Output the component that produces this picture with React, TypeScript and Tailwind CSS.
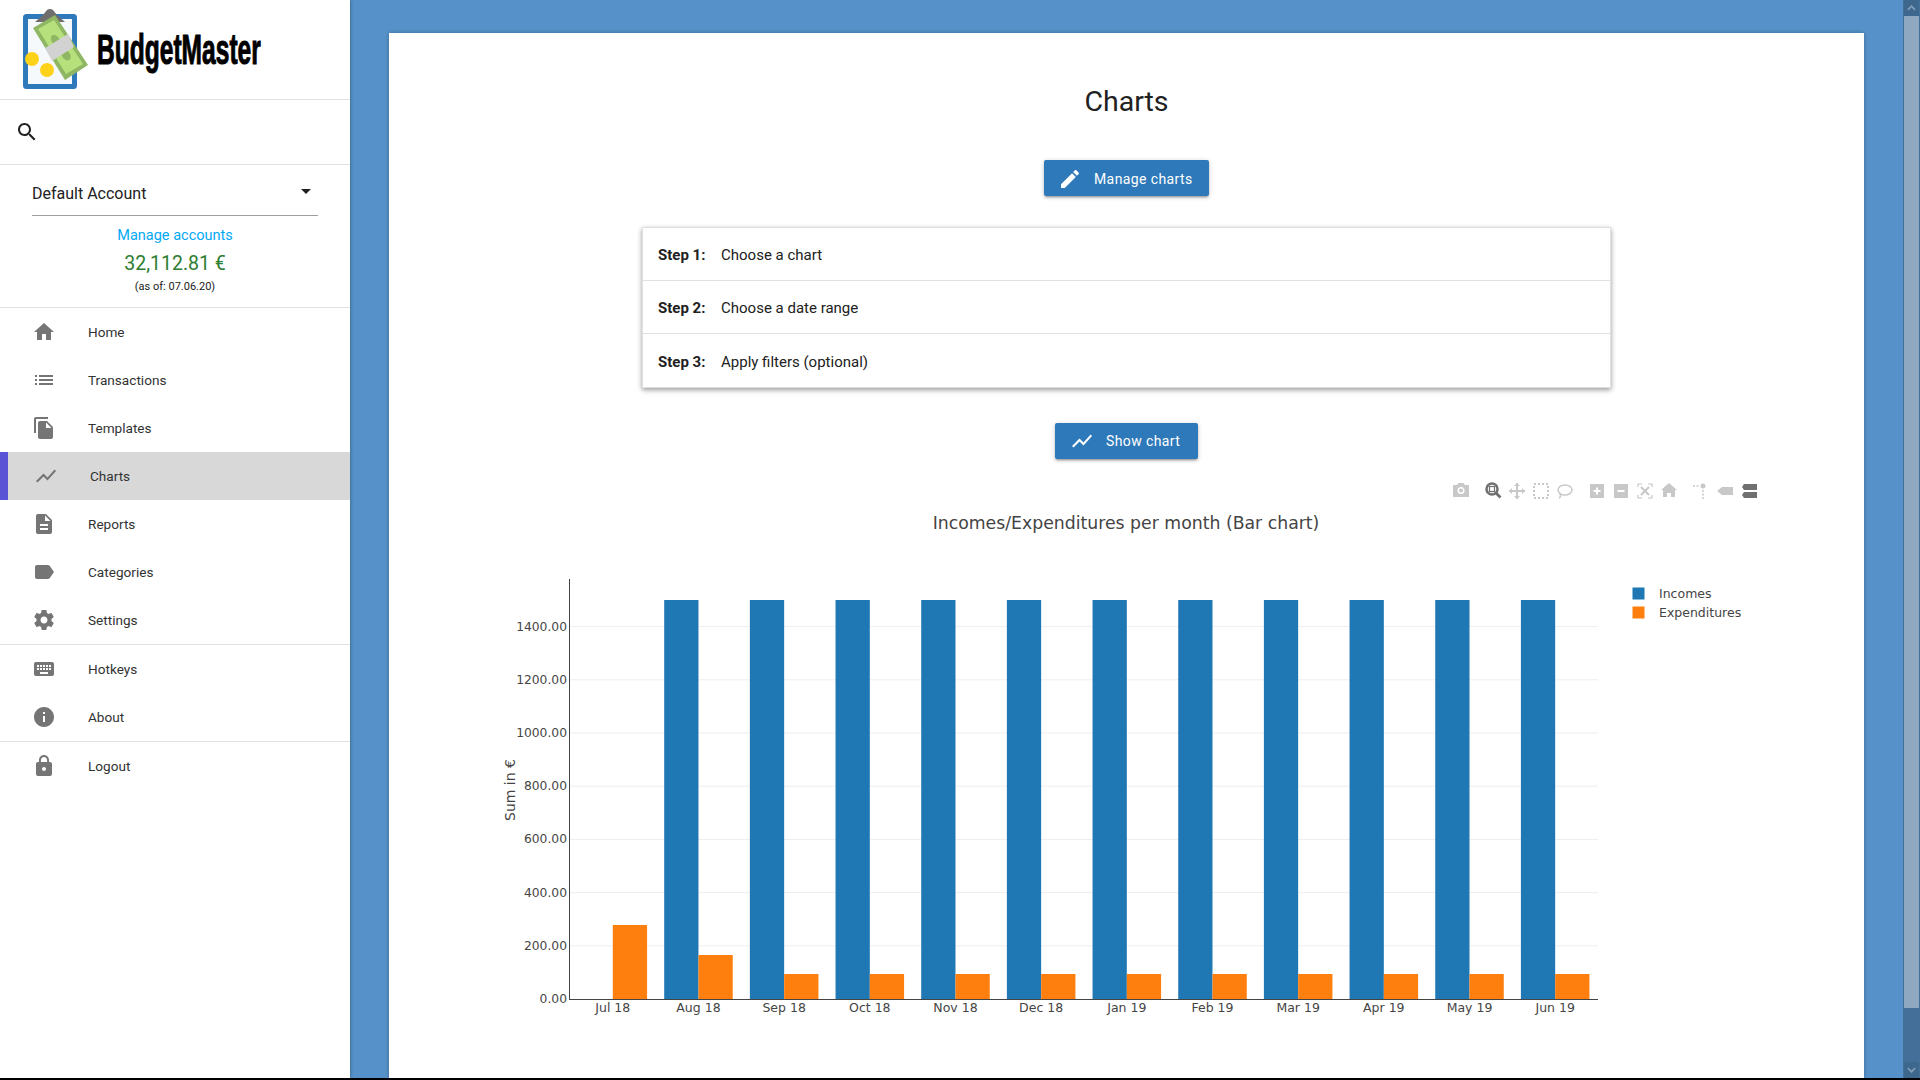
const iconPaths = {
  home: "M10 20v-6h4v6h5v-8h3L12 3 2 12h3v8z",
  list: "M3 13h2v-2H3v2zm0 4h2v-2H3v2zm0-8h2V7H3v2zm4 4h14v-2H7v2zm0 4h14v-2H7v2zM7 7v2h14V7H7z",
  copy: "M16 1H4c-1.1 0-2 .9-2 2v14h2V3h12V1zm-1 4l6 6v10c0 1.1-.9 2-2 2H7.99C6.89 23 6 22.1 6 21l.01-14c0-1.1.89-2 1.99-2h7zm-1 7h5.5L14 6.5V12z",
  chart: "M3.5 18.49l6-6.01 4 4L22 6.92l-1.41-1.41-7.09 7.97-4-4L2 16.99z",
  description: "M14 2H6c-1.1 0-1.99.9-1.99 2L4 20c0 1.1.89 2 1.99 2H18c1.1 0 2-.9 2-2V8l-6-6zm2 16H8v-2h8v2zm0-4H8v-2h8v2zm-3-5V3.5L18.5 9H13z",
  label: "M17.63 5.84C17.27 5.33 16.67 5 16 5L5 5.01C3.9 5.01 3 5.9 3 7v10c0 1.1.9 1.99 2 1.99L16 19c.67 0 1.27-.33 1.63-.84L22 12l-4.37-6.16z",
  settings: "M19.43 12.98c.04-.32.07-.64.07-.98s-.03-.66-.07-.98l2.11-1.65c.19-.15.24-.42.12-.64l-2-3.46c-.12-.22-.39-.3-.61-.22l-2.49 1c-.52-.4-1.08-.73-1.69-.98l-.38-2.65C14.46 2.18 14.25 2 14 2h-4c-.25 0-.46.18-.49.42l-.38 2.65c-.61.25-1.17.59-1.69.98l-2.49-1c-.23-.09-.49 0-.61.22l-2 3.46c-.13.22-.07.49.12.64l2.11 1.65c-.04.32-.07.65-.07.98s.03.66.07.98l-2.11 1.65c-.19.15-.24.42-.12.64l2 3.46c.12.22.39.3.61.22l2.49-1c.52.4 1.08.73 1.69.98l.38 2.65c.03.24.24.42.49.42h4c.25 0 .46-.18.49-.42l.38-2.65c.61-.25 1.17-.59 1.69-.98l2.49 1c.23.09.49 0 .61-.22l2-3.46c.12-.22.07-.49-.12-.64l-2.11-1.65zM12 15.5c-1.93 0-3.5-1.57-3.5-3.5s1.57-3.5 3.5-3.5 3.5 1.57 3.5 3.5-1.57 3.5-3.5 3.5z",
  keyboard: "M20 5H4c-1.1 0-1.99.9-1.99 2L2 17c0 1.1.9 2 2 2h16c1.1 0 2-.9 2-2V7c0-1.1-.9-2-2-2zm-9 3h2v2h-2V8zm0 3h2v2h-2v-2zM8 8h2v2H8V8zm0 3h2v2H8v-2zm-1 2H5v-2h2v2zm0-3H5V8h2v2zm9 7H8v-2h8v2zm0-4h-2v-2h2v2zm0-3h-2V8h2v2zm3 3h-2v-2h2v2zm0-3h-2V8h2v2z",
  info: "M12 2C6.48 2 2 6.48 2 12s4.48 10 10 10 10-4.48 10-10S17.52 2 12 2zm1 15h-2v-6h2v6zm0-8h-2V7h2v2z",
  lock: "M18 8h-1V6c0-2.76-2.24-5-5-5S7 3.24 7 6v2H6c-1.1 0-2 .9-2 2v10c0 1.1.9 2 2 2h12c1.1 0 2-.9 2-2V10c0-1.1-.9-2-2-2zm-6 9c-1.1 0-2-.9-2-2s.9-2 2-2 2 .9 2 2-.9 2-2 2zm3.1-9H8.9V6c0-1.71 1.39-3.1 3.1-3.1 1.71 0 3.1 1.39 3.1 3.1v2z",
  search: "M15.5 14h-.79l-.28-.27C15.41 12.59 16 11.11 16 9.5 16 5.91 13.09 3 9.5 3S3 5.91 3 9.5 5.91 16 9.5 16c1.61 0 3.09-.59 4.23-1.57l.27.28v.79l5 4.99L20.49 19l-4.99-5zm-6 0C7.01 14 5 11.99 5 9.5S7.01 5 9.5 5 14 7.01 14 9.5 11.99 14 9.5 14z",
  edit: "M3 17.25V21h3.75L17.81 9.94l-3.75-3.75L3 17.25zM20.71 7.04c.39-.39.39-1.02 0-1.41l-2.34-2.34c-.39-.39-1.02-.39-1.41 0l-1.83 1.83 3.75 3.75 1.83-1.83z",
};

function Icon({ name, className }: { name: keyof typeof iconPaths; className: string }) {
  return (
    <svg viewBox="0 0 24 24" fill="currentColor" className={className}>
      <path d={iconPaths[name]} />
    </svg>
  );
}

function Logo() {
  return (
    <svg viewBox="0 0 90 100" className="w-[90px] h-[100px] shrink-0">
      <rect x="25.5" y="16.5" width="49" height="70" rx="1" fill="#f6f9fc" stroke="#2e79b9" strokeWidth="5" />
      <path d="M35 22 L43 15 L47 10 Q50 8 53 10 L57 15 L65 22 Z" fill="#6e6e6e" />
      <path d="M33 28 L55 15 L88 65 L65 80 Z" fill="#8fb662" />
      <path d="M38 29 L54 20 L83 64 L66 74 Z" fill="#b6e07c" />
      <ellipse cx="56" cy="41" rx="4" ry="7" transform="rotate(-33 56 41)" fill="#8fb662" />
      <ellipse cx="66" cy="55" rx="4" ry="6" transform="rotate(-33 66 55)" fill="#8fb662" />
      <path d="M45 48 L68 34 L74 47 L52 61 Z" fill="#d2d2d2" />
      <circle cx="32" cy="59" r="7" fill="#ffd21a" />
      <circle cx="47" cy="70" r="7" fill="#ffd21a" />
    </svg>
  );
}

const navGroups: { icon: keyof typeof iconPaths; label: string; active?: boolean }[][] = [
  [
    { icon: "home", label: "Home" },
    { icon: "list", label: "Transactions" },
    { icon: "copy", label: "Templates" },
    { icon: "chart", label: "Charts", active: true },
    { icon: "description", label: "Reports" },
    { icon: "label", label: "Categories" },
    { icon: "settings", label: "Settings" },
  ],
  [
    { icon: "keyboard", label: "Hotkeys" },
    { icon: "info", label: "About" },
  ],
  [{ icon: "lock", label: "Logout" }],
];

function Sidebar() {
  return (
    <aside className="w-[350px] shrink-0 h-full bg-white shadow-[1px_0_3px_rgba(0,0,0,0.25)] z-10 text-[#212121]">
      <div className="h-[100px] border-b border-[#e0e0e0] flex items-start">
        <Logo />
        <span className="font-['Liberation_Sans',sans-serif] font-bold text-[42px] leading-[99px] text-black ml-[7px] scale-x-[0.585] origin-left [-webkit-text-stroke:1px_black]">
          BudgetMaster
        </span>
      </div>
      <div className="h-[65px] border-b border-[#e0e0e0] flex items-center pl-[15px]">
        <Icon name="search" className="w-6 h-6 text-[#212121]" />
      </div>
      <div className="h-[143px] border-b border-[#e0e0e0] px-[32px]">
        <div className="h-[51px] border-b border-[#9e9e9e] flex items-center justify-between pt-[8px] w-[286px] text-base">
          <span>Default Account</span>
          <svg viewBox="0 0 24 24" fill="currentColor" className="w-6 h-6 -mt-[6px]">
            <path d="M7 10l5 5 5-5z" />
          </svg>
        </div>
        <div className="w-[286px] text-center">
          <div className="text-[14.5px] leading-[20px] mt-[10px] text-[#03a9f4]">Manage accounts</div>
          <div className="text-[19.5px] leading-[24px] mt-[6px] text-[#2e7d32]">32,112.81 €</div>
          <div className="text-[11px] leading-4 mt-[3px]">(as of: 07.06.20)</div>
        </div>
      </div>
      {navGroups.map((group, i) => (
        <div key={i} className={i < navGroups.length - 1 ? "border-b border-[#e0e0e0]" : ""}>
          {group.map((item) => (
            <div
              key={item.label}
              className={
                item.active
                  ? "h-12 flex items-center gap-8 bg-[#d8d8d8] border-l-8 border-[#5b53d6] pl-[26px] text-[13.6px] text-[#333]"
                  : "h-12 flex items-center gap-8 pl-[32px] text-[13.6px] text-[#333]"
              }
            >
              <Icon name={item.icon} className="w-6 h-6 text-[#757575] shrink-0" />
              <span>{item.label}</span>
            </div>
          ))}
        </div>
      ))}
    </aside>
  );
}

function BlueButton({ icon, label, className }: { icon: keyof typeof iconPaths; label: string; className: string }) {
  return (
    <div
      className={`h-9 flex items-center bg-[#2e79b9] text-white text-sm tracking-[0.4px] rounded-[2px] shadow-[0_2px_2px_rgba(0,0,0,0.14),0_3px_1px_-2px_rgba(0,0,0,0.12),0_1px_5px_rgba(0,0,0,0.2)] ${className}`}
    >
      <Icon name={icon} className="w-6 h-6 mr-[12px]" />
      <span>{label}</span>
    </div>
  );
}

const steps = [
  ["Step 1:", "Choose a chart", "pt-[2px]"],
  ["Step 2:", "Choose a date range", "pt-[2px]"],
  ["Step 3:", "Apply filters (optional)", "pt-[3px]"],
];

const months = ["Jul 18", "Aug 18", "Sep 18", "Oct 18", "Nov 18", "Dec 18", "Jan 19", "Feb 19", "Mar 19", "Apr 19", "May 19", "Jun 19"];
const expenditures = [925, 955, 974, 974, 974, 974, 974, 974, 974, 974, 974, 974];
const ticks = [0, 200, 400, 600, 800, 1000, 1200, 1400];

const barWidth = 34.27;
const step = 85.67;
const inactive = "#c8c8c8";
const activeTool = "#707070";

function Modebar() {
  return (
    <g>
      {/* camera */}
      <path d="M1453 485h4l1.5-2h5l1.500 2h4v12h-16z" fill={inactive} />
      <circle cx="1461" cy="490.500" r="3.500" fill="#fff" />
      <circle cx="1461" cy="490.500" r="2" fill={inactive} />
      {/* zoom */}
      <circle cx="1492" cy="489" r="5.500" fill="#fff" stroke={activeTool} strokeWidth="2.500" />
      <rect x="1489.500" y="486.500" width="5" height="5" fill="#fff" stroke={activeTool} strokeWidth="1.200" />
      <path d="M1496 493l4.500 4.500" stroke={activeTool} strokeWidth="2.800" />
      {/* pan */}
      <path d="M1517 483v16M1509 491h16" stroke={inactive} strokeWidth="2" />
      <path d="M1517 483l-3 3h6zM1517 499l-3-3h6zM1509 491l3-3v6zM1525 491l-3-3v6z" fill={inactive} />
      {/* box select */}
      <rect x="1534" y="484" width="14" height="14" fill="none" stroke={inactive} strokeWidth="2" strokeDasharray="2 2" />
      {/* lasso */}
      <ellipse cx="1565" cy="490" rx="7" ry="5" fill="none" stroke={inactive} strokeWidth="1.500" />
      <path d="M1560 494c1 2 0 4-1 4" fill="none" stroke={inactive} strokeWidth="1.500" />
      {/* zoom in */}
      <rect x="1590" y="484" width="14" height="14" fill={inactive} />
      <path d="M1597 487.500v7M1593.500 491h7" stroke="#fff" strokeWidth="2" />
      {/* zoom out */}
      <rect x="1614" y="484" width="14" height="14" fill={inactive} />
      <path d="M1617.500 491h7" stroke="#fff" strokeWidth="2" />
      {/* autoscale */}
      <path d="M1638 487v-3h4M1648 484h4v3M1652 495v3h-4M1642 498h-4v-3" fill="none" stroke={inactive} strokeWidth="1.200" />
      <path d="M1641 487l8 8M1649 487l-8 8" stroke={inactive} strokeWidth="2" />
      {/* home */}
      <path d="M1669 483l-8 7h2v7h4v-4h4v4h4v-7h2z" fill={inactive} />
      {/* spikes */}
      <circle cx="1703" cy="486" r="2.500" fill={inactive} />
      <path d="M1693 486h6M1703 490v9" stroke={inactive} strokeWidth="1.500" strokeDasharray="2 1.500" />
      {/* hover closest */}
      <path d="M1717 491l5-4h11v8h-11z" fill={inactive} />
      {/* hover compare */}
      <path d="M1742 487l2-3h13v6h-13zM1742 495l2-3h13v6h-13z" fill={activeTool} />
    </g>
  );
}

function BarChart() {
  return (
    <svg viewBox="389 470 1475 608" className="w-[1475px] h-[608px] block font-['DejaVu_Sans',sans-serif]">
      <Modebar />
      <text x="1126" y="529" textAnchor="middle" fontSize="17.3" fill="#444">
        Incomes/Expenditures per month (Bar chart)
      </text>

      {ticks.slice(1).map((t) => {
        const y = 999 - (t / 200) * 53.2;
        return <line key={t} x1="570" x2="1598" y1={y} y2={y} stroke="#eee" strokeWidth="1" />;
      })}

      {months.map((m, i) => {
        const center = 612.8 + i * step;
        return (
          <g key={m}>
            {i > 0 && <rect x={center - barWidth} y="600" width={barWidth} height="399" fill="#1f77b4" />}
            <rect x={center} y={expenditures[i]} width={barWidth} height={999 - expenditures[i]} fill="#ff7f0e" />
            <text x={center} y="1012" textAnchor="middle" fontSize="12.5" fill="#444">
              {m}
            </text>
          </g>
        );
      })}

      <line x1="569.500" x2="569.500" y1="579" y2="999.500" stroke="#444" strokeWidth="1" />
      <line x1="569" x2="1598" y1="999.500" y2="999.500" stroke="#444" strokeWidth="1" />

      {ticks.map((t) => (
        <text key={t} x="567" y={999 - (t / 200) * 53.2 + 4} textAnchor="end" fontSize="12.3" fill="#444">
          {t.toFixed(2)}
        </text>
      ))}

      <text transform="translate(515 790) rotate(-90)" textAnchor="middle" fontSize="14" fill="#444">
        Sum in €
      </text>

      <rect x="1632.500" y="587.500" width="12" height="12" fill="#1f77b4" />
      <text x="1659" y="597.500" fontSize="12.500" fill="#444">
        Incomes
      </text>
      <rect x="1632.500" y="606.500" width="12" height="12" fill="#ff7f0e" />
      <text x="1659" y="616.500" fontSize="12.500" fill="#444">
        Expenditures
      </text>
    </svg>
  );
}

function Scrollbar() {
  return (
    <div className="w-[17px] shrink-0 h-full bg-[#436f98] flex flex-col items-center">
      <div className="w-[15px] h-4 bg-[#3d678d] flex items-center justify-center">
        <svg viewBox="0 0 10 6" className="w-[9px] h-[6px]">
          <path d="M1 5l4-4 4 4" fill="none" stroke="#7f9cb8" strokeWidth="2" />
        </svg>
      </div>
      <div className="w-[15px] h-[992px] bg-[#8fa8c2]" />
      <div className="flex-1" />
      <div className="w-[15px] h-4 bg-[#3d678d] flex items-center justify-center">
        <svg viewBox="0 0 10 6" className="w-[9px] h-[6px]">
          <path d="M1 1l4 4 4-4" fill="none" stroke="#7f9cb8" strokeWidth="2" />
        </svg>
      </div>
    </div>
  );
}

export default function App() {
  return (
    <div className="h-[1080px] w-[1920px] overflow-hidden bg-black font-['Roboto',sans-serif]">
      <div className="h-[1078px] flex bg-[#5692c9]">
        <Sidebar />
        <main className="flex-1 h-full pl-[39px] pt-[33px] overflow-hidden">
          <div className="w-[1475px] h-[1045px] bg-white shadow-[0_0_4px_rgba(0,0,0,0.3)] flex flex-col items-center">
            <h1 className="text-[28.5px] leading-[38px] mt-[50px] text-[#212121]">Charts</h1>
            <BlueButton icon="edit" label="Manage charts" className="w-[165px] mt-[39px] pl-[14px] pt-px" />
            <div className="w-[969px] mt-[31px] bg-white shadow-[0_2px_5px_rgba(0,0,0,0.4)] border border-[#e0e0e0]">
              {steps.map(([a, b, pad], i) => (
                <div
                  key={a}
                  className={`h-[53px] flex items-center px-[15px] text-[15px] text-[#212121] ${pad} ${i < 2 ? "border-b border-[#e0e0e0]" : ""}`}
                >
                  <span className="font-bold w-[63px]">{a}</span>
                  <span>{b}</span>
                </div>
              ))}
            </div>
            <BlueButton icon="chart" label="Show chart" className="w-[143px] mt-[35px] pl-[15px]" />
            <div className="mt-[11px]">
              <BarChart />
            </div>
          </div>
        </main>
        <Scrollbar />
      </div>
    </div>
  );
}
